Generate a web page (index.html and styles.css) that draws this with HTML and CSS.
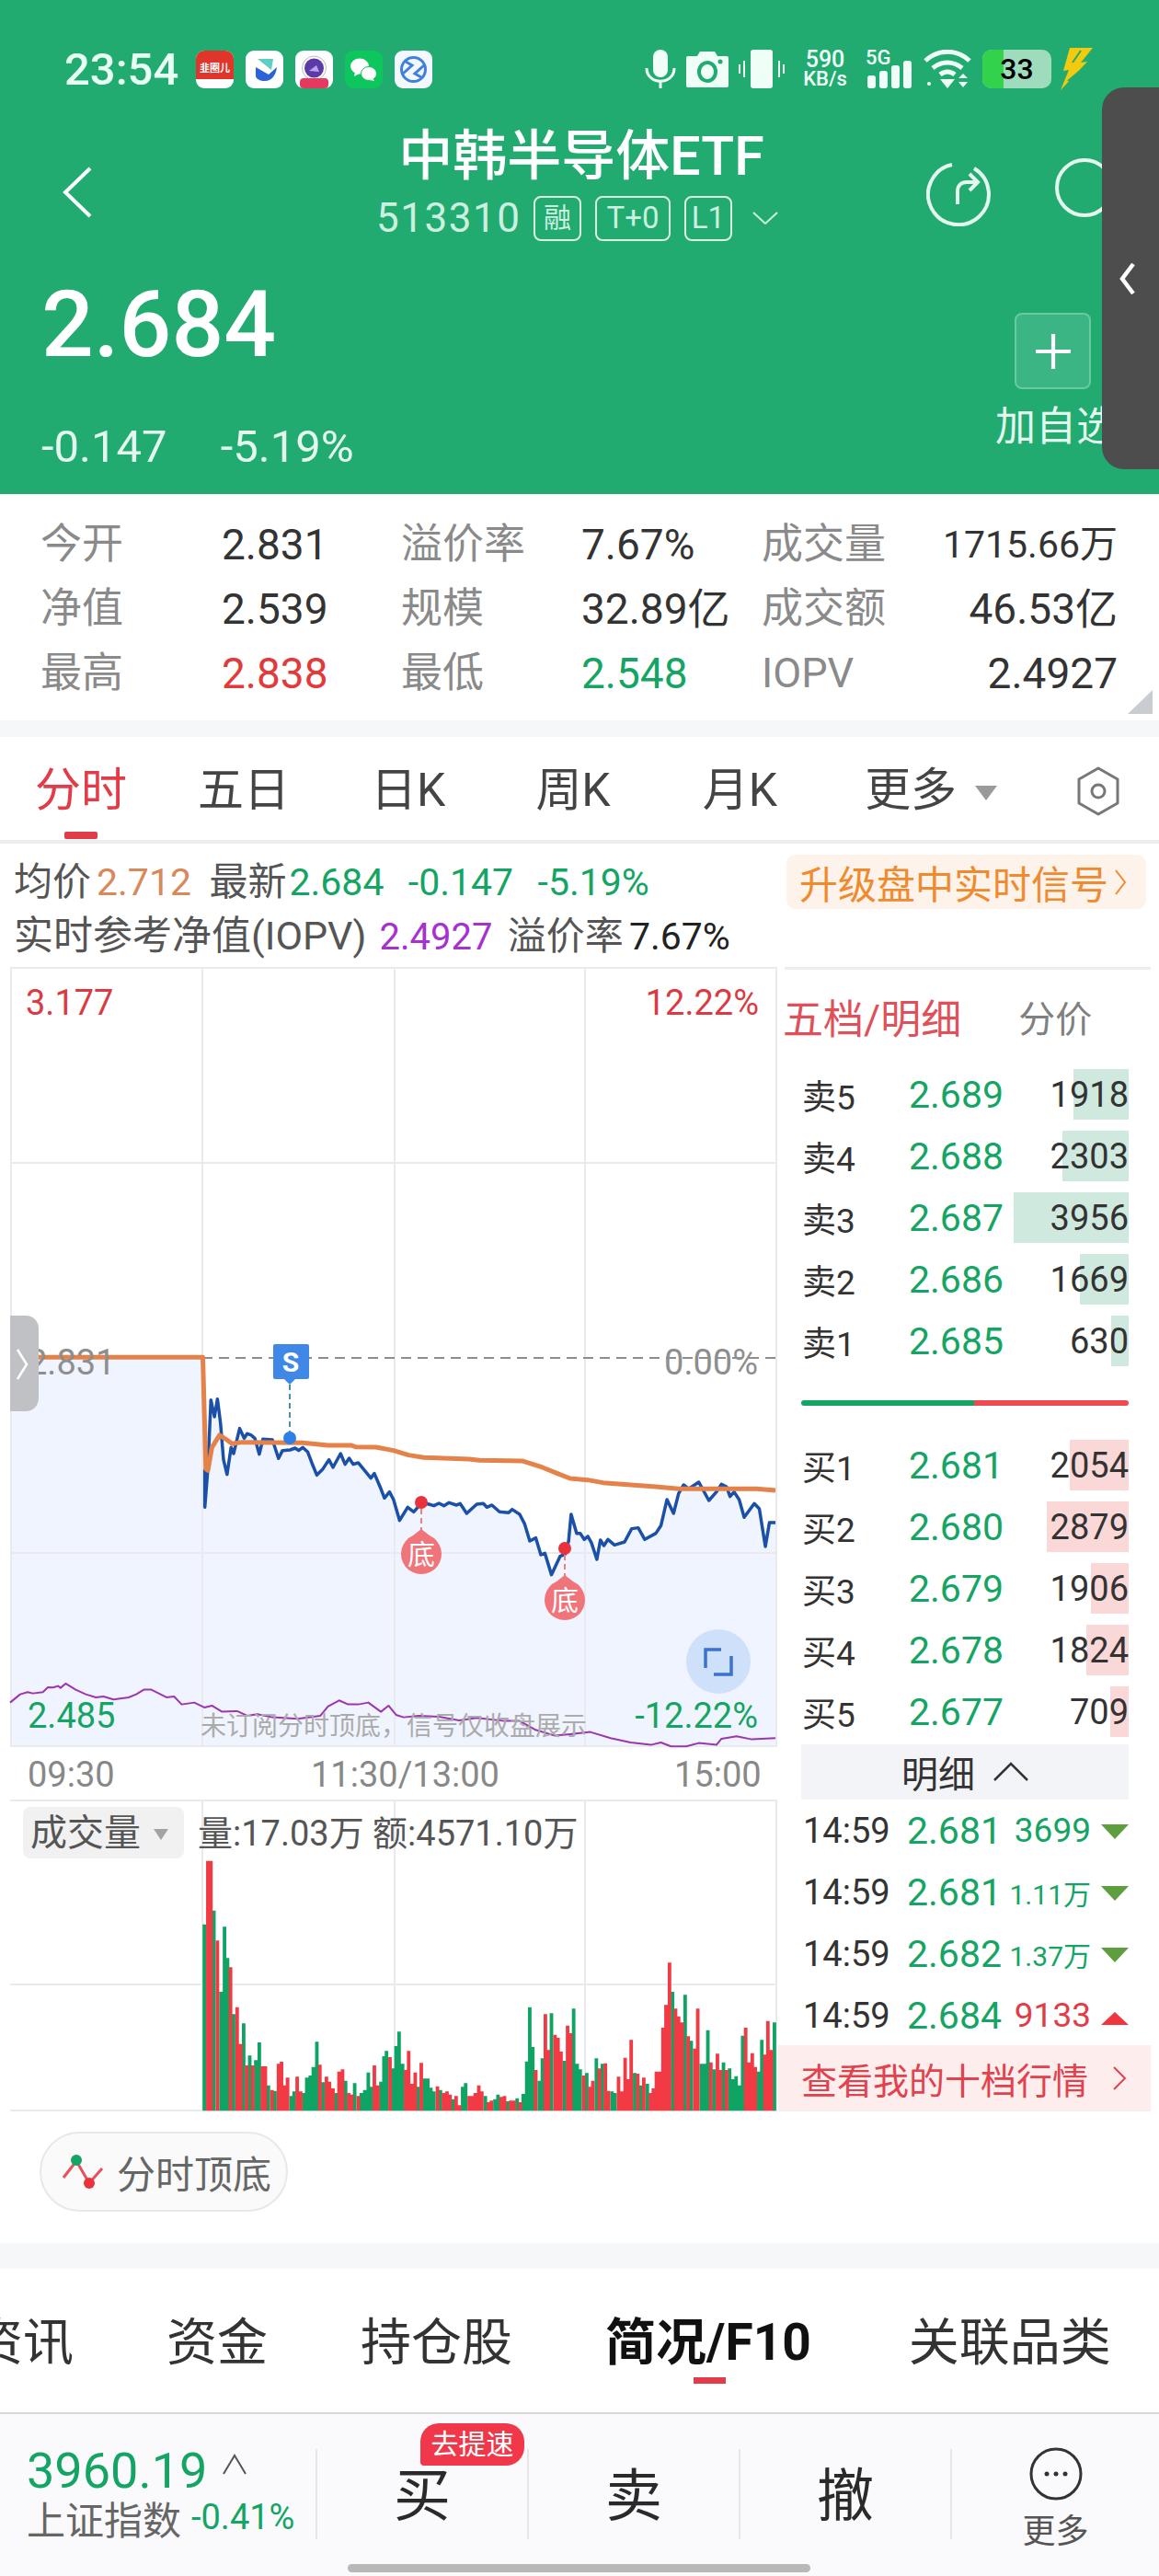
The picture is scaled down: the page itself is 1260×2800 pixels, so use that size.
FILE: index.html
```html
<!DOCTYPE html>
<html lang="zh-CN">
  <head>
    <meta charset="utf-8">
    <title>中韩半导体ETF</title>
    <link rel="stylesheet" href="styles.css">
  </head>
  <body>
    <div class="phone">

      <!-- 顶部绿色行情头 -->
      <header class="head">
        <div class="status">
          <span class="clock">23:54</span>
          <div class="apps">
            <svg class="app" viewBox="0 0 41 41"><rect width="41" height="41" rx="9" fill="#fff"/><path d="M0 9a9 9 0 0 1 9-9h23a9 9 0 0 1 9 9v22H0z" fill="#E0352B"/><text x="20.5" y="23" class="app-txt">韭圈儿</text></svg>
            <svg class="app" viewBox="0 0 41 41"><rect width="41" height="41" rx="9" fill="#fff"/><path d="M11 18l14 8 9-8c-1 9-6 15-13 15-5 0-10-2-10-6z" fill="#2A62D8"/><path d="M13 9h17l-2 12z" fill="#5CCFC0"/></svg>
            <svg class="app" viewBox="0 0 41 41"><rect width="41" height="41" rx="9" fill="#fff"/><circle cx="20.500" cy="19" r="13" fill="#fff" stroke="#bbb"/><circle cx="20.500" cy="19" r="10.500" fill="#5C3BA8"/><path d="M15 22l8-6 3 7z" fill="#B9A4EA"/><rect x="5" y="30" width="31" height="11" rx="4" fill="#E5395F"/></svg>
            <svg class="app" viewBox="0 0 41 41"><rect width="41" height="41" rx="9" fill="#0DC65E"/><ellipse cx="16" cy="17" rx="10" ry="8.500" fill="#fff"/><path d="M11 23l-1 5 6-3z" fill="#fff"/><ellipse cx="26" cy="25" rx="8.500" ry="7.500" fill="#fff" stroke="#0DC65E"/><path d="M30 30l2 3-5-1z" fill="#fff"/></svg>
            <svg class="app" viewBox="0 0 41 41"><rect width="41" height="41" rx="9" fill="#F3F7FE"/><circle cx="20.500" cy="20.500" r="13" fill="none" stroke="#3F80DC" stroke-width="3"/><path d="M9 25l10-9-7-4M32 16l-10 9 7 4" fill="none" stroke="#3F80DC" stroke-width="3"/></svg>
          </div>
          <div class="sys">
            <svg class="sys-mic" viewBox="0 0 34 42"><rect x="9" width="16" height="30" rx="8" fill="#EFFFF8"/><path d="M2 20c0 19 30 19 30 0M17 33v9" fill="none" stroke="#EFFFF8" stroke-width="3"/></svg>
            <svg class="sys-cam" viewBox="0 0 46 40"><path d="M2 6h10l3-5h16l3 5h10a2 2 0 0 1 2 2v30a2 2 0 0 1-2 2H2a2 2 0 0 1-2-2V8a2 2 0 0 1 2-2z" fill="#EFFFF8"/><ellipse cx="23" cy="23" rx="9" ry="10" fill="none" stroke="#22AB71" stroke-width="4"/><circle cx="37" cy="12" r="2.500" fill="#22AB71"/></svg>
            <svg class="sys-vib" viewBox="0 0 50 42"><rect x="13" width="24" height="42" rx="3" fill="#EFFFF8"/><path d="M6 12v18M1 16v10M44 12v18M49 16v10" stroke="#EFFFF8" stroke-width="2"/></svg>
            <div class="speed"><b>590</b><b>KB/s</b></div>
            <div class="net">
              <span class="net-5g">5G</span>
              <svg viewBox="0 0 48 30"><rect y="16" width="9" height="14" rx="3" fill="#EFFFF8"/><rect x="13" y="11" width="9" height="19" rx="3" fill="#EFFFF8"/><rect x="26" y="5" width="9" height="25" rx="3" fill="#EFFFF8"/><rect x="39" width="9" height="30" rx="3" fill="#EFFFF8"/></svg>
            </div>
            <svg class="sys-wifi" viewBox="0 0 52 42"><path d="M2 12c14-13 34-13 48 0M10 20c10-8 22-8 32 0M18 27c5-4 11-4 16 0" fill="none" stroke="#EFFFF8" stroke-width="5"/><path d="M18 32h16l-8 10z" fill="#EFFFF8"/><path d="M38 31l5-5 5 5zM38 35h10l-5 6z" fill="#EFFFF8"/><circle cx="6" cy="37" r="2" fill="#EFFFF8"/></svg>
            <div class="batt"><i class="batt-fill"></i><span>33</span></div>
            <svg class="sys-bolt" viewBox="0 0 35 46"><path d="M10 0h25L22 16l7-1L0 46l9-22-6 1z" fill="#F2CB10"/><path d="M13 16L22 3M8 36l12-10" stroke="#22AB71" stroke-width="2"/></svg>
          </div>
        </div>

        <div class="nav">
          <svg class="back" viewBox="0 0 32 56"><path d="M30 2L3 28l27 26" fill="none" stroke="#fff" stroke-width="4"/></svg>
          <div class="name">
            <h1>中韩半导体ETF</h1>
            <div class="code">
              <span class="code-no">513310</span>
              <span class="tag">融</span>
              <span class="tag tag-t">T+0</span>
              <span class="tag tag-l">L1</span>
              <svg class="code-more" viewBox="0 0 28 14"><path d="M1 1l13 12L27 1" fill="none" stroke="#CDEFE0" stroke-width="2"/></svg>
            </div>
          </div>
          <svg class="nav-icons" viewBox="0 0 210 76"><path d="M28 9a33 33 0 1 0 24 4" fill="none" stroke="#E3F7EE" stroke-width="4"/><path d="M34 52V38c0-6 4-10 10-10h10M47 19l9 9-9 9" fill="none" stroke="#E3F7EE" stroke-width="4"/><circle cx="172" cy="34" r="30" fill="none" stroke="#E3F7EE" stroke-width="4"/></svg>
        </div>

        <div class="price-row">
          <div>
            <div class="price">2.684</div>
            <div class="change"><span>-0.147</span><span>-5.19%</span></div>
          </div>
          <div class="watch">
            <div class="watch-btn"><svg viewBox="0 0 40 40"><path d="M20 2v36M2 20h36" stroke="#fff" stroke-width="4"/></svg></div>
            <div class="watch-txt">加自选</div>
          </div>
        </div>
      </header>

      <!-- 盘口数据 -->
      <section class="stats">
        <span class="lab">今开</span><span class="val">2.831</span>
        <span class="lab">溢价率</span><span class="val">7.67%</span>
        <span class="lab">成交量</span><span class="val val-end val-sm">1715.66万</span>
        <span class="lab">净值</span><span class="val">2.539</span>
        <span class="lab">规模</span><span class="val">32.89亿</span>
        <span class="lab">成交额</span><span class="val val-end">46.53亿</span>
        <span class="lab">最高</span><span class="val up">2.838</span>
        <span class="lab">最低</span><span class="val down">2.548</span>
        <span class="lab">IOPV</span><span class="val val-end">2.4927</span>
        <i class="corner"></i>
      </section>
      <div class="gap gap-a"></div>

      <!-- 周期切换 -->
      <nav class="periods">
        <span class="period period-on">分时</span>
        <span class="period p2">五日</span>
        <span class="period p3">日K</span>
        <span class="period p4">周K</span>
        <span class="period p5">月K</span>
        <span class="period p6">更多<i class="caret"></i></span>
        <svg class="hex" viewBox="0 0 48 54"><path d="M24 2l21 12v26L24 52 3 40V14z" fill="none" stroke="#777" stroke-width="3" stroke-linejoin="round"/><circle cx="24" cy="27" r="7" fill="none" stroke="#777" stroke-width="3"/></svg>
      </nav>

      <div class="brief">
        <div class="brief-row">
          <span class="br-l">均价</span><span class="br-n avg">2.712</span>
          <span class="br-l br-gap">最新</span><span class="br-n br-new down">2.684</span>
          <span class="br-n down br-num">-0.147</span>
          <span class="br-n down br-num">-5.19%</span>
        </div>
        <div class="brief-row">
          <span class="br-l br-long">实时参考净值(IOPV)</span><span class="br-n iopv">2.4927</span>
          <span class="br-l br-gap2">溢价率</span><span class="br-n br-v">7.67%</span>
        </div>
        <div class="signal">升级盘中实时信号<svg viewBox="0 0 14 30"><path d="M2 2l10 13L2 28" fill="none" stroke="#F08A2E" stroke-width="2"/></svg></div>
      </div>

      <!-- 分时图 + 五档 -->
      <div class="board">
        <svg class="chart" viewBox="0 1050 853 1245">
          <path class="fill" d="M11 1476H220L222 1597 L223 1638 226 1597 229 1522 233 1540 236 1521 240 1547 243 1587 247 1603 251 1573 254 1580 260 1553 265 1563 269 1558 273 1560 277 1563 282 1581 286 1564 296 1565 303 1585 307 1577 315 1576 321 1574 325 1577 329 1573 335 1578 339 1590 344 1603 351 1597 358 1587 362 1595 370 1580 375 1592 380 1585 384 1592 389 1590 398 1600 403 1607 407 1602 414 1618 418 1628 423 1622 428 1630 434 1653 443 1638 450 1643 458 1633 466 1635 472 1637 477 1634 483 1637 488 1633 496 1636 500 1634 507 1645 518 1635 525 1634 529 1638 535 1636 543 1643 553 1644 557 1641 565 1646 570 1657 576 1675 583 1672 588 1690 592 1688 600 1712 609 1692 614 1689 618 1675 621 1646 627 1667 631 1667 635 1673 639 1670 643 1677 649 1695 653 1674 657 1680 661 1673 668 1679 679 1676 687 1662 694 1661 701 1673 713 1667 718 1658 725 1630 732 1645 738 1623 743 1614 749 1618 760 1611 771 1631 779 1622 784 1613 790 1616 794 1627 798 1622 804 1630 809 1649 820 1634 825 1640 832 1681 836 1655 843 1655V1898H11z"/>
          <path class="grid" d="M11 1052H845M11 1264H845M11 1688H845M11 1898H845M12 1052V1898M220 1052V1898M429 1052V1898M636 1052V1898M844 1052V1898"/>
          <path class="mid" d="M220 1476H845"/>
          <g transform="translate(0 1400) scale(.5485 .3333)">
            <polyline class="ln ln-purple" points="20,1352 40,1325 55,1318 65,1322 85,1318 95,1302 105,1303 115,1298 120,1304 130,1290 150,1310 170,1325 190,1335 205,1332 225,1342 255,1335 270,1325 285,1310 300,1310 330,1335 345,1332 360,1358 385,1352 405,1368 420,1362 440,1382 470,1380 490,1395 510,1390 540,1400 590,1405 635,1395 650,1365 672,1345 690,1358 710,1358 730,1352 755,1382 770,1362 785,1392 800,1400 830,1395 870,1398 910,1410 945,1402 1000,1412 1030,1412 1060,1440 1100,1460 1130,1455 1170,1448 1210,1468 1250,1482 1290,1490 1310,1482 1330,1495 1360,1495 1385,1484 1420,1490 1430,1470 1460,1462 1490,1472 1537,1468"/>
            <polyline class="ln ln-blue" points="406,590 406,715 412,590 418,365 425,420 431,362 437,440 443,560 450,608 458,520 463,540 475,458 484,490 490,475 498,480 505,490 514,542 521,493 540,495 552,556 560,530 575,528 585,522 592,530 600,520 610,535 618,570 628,610 640,590 652,560 660,585 675,540 684,575 692,555 700,575 710,570 725,600 735,620 742,605 755,655 762,685 772,665 780,690 792,758 808,715 820,730 836,700 850,705 860,710 870,702 880,710 890,700 905,708 912,703 925,735 945,705 958,703 965,715 975,708 990,730 1008,733 1015,722 1030,738 1040,770 1050,825 1062,815 1072,870 1080,865 1093,935 1110,875 1120,868 1127,825 1132,738 1143,800 1150,800 1158,820 1165,810 1172,830 1183,885 1190,822 1197,840 1205,820 1218,838 1238,828 1252,785 1265,782 1278,820 1300,800 1310,775 1322,690 1335,735 1345,670 1355,642 1365,655 1385,633 1405,693 1420,665 1430,640 1440,648 1447,680 1455,665 1465,690 1475,748 1495,703 1505,720 1517,843 1525,765 1537,765"/>
            <polyline class="ln ln-orange" points="20,226 402,226 408,590 412,595 420,520 435,480 445,490 460,508 480,503 600,505 650,513 695,513 705,518 745,519 780,530 810,545 840,553 930,558 950,562 1035,564 1075,585 1105,605 1130,621 1165,626 1195,635 1300,648 1345,655 1500,655 1537,660"/>
          </g>

          <text class="t t-up" x="28" y="1103">3.177</text>
          <text class="t t-up t-end" x="825" y="1103">12.22%</text>
          <text class="t t-grey" x="30" y="1494">2.831</text>
          <text class="t t-grey t-end" x="824" y="1494">0.00%</text>
          <text class="t t-down" x="30" y="1878">2.485</text>
          <text class="t t-down t-end" x="824" y="1878">-12.22%</text>
          <text class="t-tip" x="218" y="1886">未订阅分时顶底，信号仅收盘展示</text>

          <path class="hd" d="M11 1430h17a14 14 0 0 1 14 14v76a14 14 0 0 1-14 14H11z"/>
          <path d="M19 1467l10 16-10 16" fill="none" stroke="#fff" stroke-width="2.500"/>

          <path class="dash dash-s" d="M315 1505V1557"/>
          <circle cx="315" cy="1563" r="7" fill="#2F7FE6"/>
          <path d="M299 1461h35a2 2 0 0 1 2 2v34a2 2 0 0 1-2 2h-13l-6 6-6-6h-10a2 2 0 0 1-2-2v-34a2 2 0 0 1 2-2z" fill="#3F88E8"/>
          <text class="t-s" x="316" y="1491">S</text>

          <path class="dash dash-r" d="M458 1640V1664"/>
          <circle cx="458" cy="1633" r="7" fill="#E8323C"/>
          <path class="pin" d="M458 1662l9 7a22 22 0 1 1-18 0z"/>
          <text class="t-pin" x="458" y="1700">底</text>
          <path class="dash dash-r" d="M614 1690V1714"/>
          <circle cx="614" cy="1683" r="7" fill="#E8323C"/>
          <path class="pin" d="M614 1712l9 7a22 22 0 1 1-18 0z"/>
          <text class="t-pin" x="614" y="1750">底</text>

          <ellipse cx="781" cy="1806" rx="35" ry="35" fill="#CFE0FA"/>
          <path d="M784 1793H767V1813M795 1800V1820H776" fill="none" stroke="#3A72D0" stroke-width="3.500"/>

          <text class="t-axis" x="30" y="1942">09:30</text>
          <text class="t-axis" x="338" y="1942">11:30/13:00</text>
          <text class="t-axis" x="733" y="1942">15:00</text>

          <path class="grid" d="M11 1957H845M11 2157H845M11 2294H845M220 1957V2294M429 1957V2294M636 1957V2294M844 1957V2294"/>
          <g transform="translate(0 1900) scale(.5485 .3333)">
            <path class="bar bar-g" d="M405 575V1183M424 530V1183M438 795V1183M445 583V1183M451 685V1183M463 868V1183M483 898V1183M495 1003V1183M507 1018V1183M514 960V1183M532 1100V1183M545 1118V1183M577 1135V1183M583 1120V1183M602 1125V1183M608 1075V1183M615 1068V1183M621 1040V1183M628 958V1183M640 1090V1183M666 1125V1183M685 1085V1183M703 1093V1183M716 1125V1183M723 1115V1183M730 1058V1183M736 1105V1183M755 1088V1183M761 1005V1183M766 988V1183M779 1045V1183M785 972V1183M791 925V1183M798 1030V1183M829 1105V1183M841 1078V1183M848 1078V1183M854 1108V1183M860 1120V1183M873 1115V1183M898 1145V1183M917 1105V1183M923 1093V1183M962 1135V1183M981 1145V1183M987 1130V1183M1006 1152V1183M1025 1142V1183M1037 1128V1183M1044 1022V1183M1050 845V1183M1056 975V1183M1069 1085V1183M1075 1012V1183M1093 865V1183M1119 1020V1183M1137 850V1183M1144 1030V1183M1150 1048V1183M1163 1060V1183M1182 1012V1183M1194 1030V1183M1213 1120V1183M1219 1125V1183M1258 1060V1183M1270 1100V1183M1283 1095V1183M1333 795V1183M1358 805V1183M1370 955V1183M1390 1030V1183M1396 1030V1183M1403 920V1183M1415 1048V1183M1434 1025V1183M1446 1045V1183M1452 1080V1183M1459 1070V1183M1466 1100V1183M1472 938V1183M1504 1055V1183M1510 952V1183M1535 895V1183"/>
            <path class="bar bar-r" d="M412 368V1183M418 368V1183M431 628V1183M457 715V1183M470 845V1183M477 965V1183M489 1035V1183M501 1035V1183M520 1038V1183M526 1038V1183M539 1115V1183M552 1030V1183M558 1023V1183M564 1100V1183M570 1075V1183M589 1072V1183M596 1120V1183M634 1033V1183M647 1072V1183M653 1088V1183M660 1110V1183M672 1055V1183M679 1048V1183M691 1125V1183M697 1130V1183M710 1135V1183M742 1035V1183M749 1100V1183M773 1008V1183M804 1050V1183M810 988V1183M817 1095V1183M823 1058V1183M835 1027V1183M867 1103V1183M879 1125V1183M886 1120V1183M892 1130V1183M904 1135V1183M911 1165V1183M930 1135V1183M936 1135V1183M942 1125V1183M949 1100V1183M955 1120V1183M968 1155V1183M974 1150V1183M993 1138V1183M1000 1135V1183M1012 1150V1183M1019 1150V1183M1031 1155V1183M1062 1050V1183M1081 868V1183M1087 985V1183M1100 935V1183M1106 945V1183M1112 990V1183M1125 905V1183M1131 930V1183M1157 1068V1183M1169 1105V1183M1175 1085V1183M1188 1045V1183M1200 1028V1183M1206 1118V1183M1226 1072V1183M1232 1120V1183M1239 1010V1183M1245 1080V1183M1251 952V1183M1264 1062V1183M1276 1075V1183M1289 1125V1183M1295 1110V1183M1301 1055V1183M1307 1055V1183M1314 912V1183M1320 838V1183M1327 700V1183M1339 850V1183M1345 875V1183M1352 895V1183M1364 940V1183M1377 980V1183M1383 850V1183M1409 1025V1183M1422 997V1183M1428 1050V1183M1440 1050V1183M1478 912V1183M1485 1025V1183M1491 995V1183M1497 1040V1183M1516 1000V1183M1522 890V1183M1529 985V1183"/>
          </g>

          <rect x="25" y="1964" width="175" height="56" rx="8" fill="#F1F1F1"/>
          <text class="t-vol" x="33" y="2006">成交量</text>
          <path d="M167 1988h16l-8 12z" fill="#A3A3A3"/>
          <text class="t-volinfo" x="215" y="2006">量:17.03万 额:4571.10万</text>
        </svg>

        <aside class="book">
          <div class="book-top"><span class="book-tab">五档/明细</span><span class="book-fen">分价</span></div>
          <div class="lv"><span class="lv-n">卖5</span><span class="lv-p">2.689</span><span class="lv-v"><i class="lv-bar lv-s" style="width:60px"></i><em>1918</em></span></div>
          <div class="lv"><span class="lv-n">卖4</span><span class="lv-p">2.688</span><span class="lv-v"><i class="lv-bar lv-s" style="width:72px"></i><em>2303</em></span></div>
          <div class="lv"><span class="lv-n">卖3</span><span class="lv-p">2.687</span><span class="lv-v"><i class="lv-bar lv-s" style="width:125px"></i><em>3956</em></span></div>
          <div class="lv"><span class="lv-n">卖2</span><span class="lv-p">2.686</span><span class="lv-v"><i class="lv-bar lv-s" style="width:53px"></i><em>1669</em></span></div>
          <div class="lv"><span class="lv-n">卖1</span><span class="lv-p">2.685</span><span class="lv-v"><i class="lv-bar lv-s" style="width:19px"></i><em>630</em></span></div>
          <div class="ratio"><i class="ratio-g"></i><i class="ratio-r"></i></div>
          <div class="lv"><span class="lv-n">买1</span><span class="lv-p">2.681</span><span class="lv-v"><i class="lv-bar lv-b" style="width:64px"></i><em>2054</em></span></div>
          <div class="lv"><span class="lv-n">买2</span><span class="lv-p">2.680</span><span class="lv-v"><i class="lv-bar lv-b" style="width:89px"></i><em>2879</em></span></div>
          <div class="lv"><span class="lv-n">买3</span><span class="lv-p">2.679</span><span class="lv-v"><i class="lv-bar lv-b" style="width:41px"></i><em>1906</em></span></div>
          <div class="lv"><span class="lv-n">买4</span><span class="lv-p">2.678</span><span class="lv-v"><i class="lv-bar lv-b" style="width:46px"></i><em>1824</em></span></div>
          <div class="lv"><span class="lv-n">买5</span><span class="lv-p">2.677</span><span class="lv-v"><i class="lv-bar lv-b" style="width:20px"></i><em>709</em></span></div>
          <div class="detail-head">明细<svg viewBox="0 0 38 22"><path d="M1 20L19 2l18 18" fill="none" stroke="#333" stroke-width="2.500"/></svg></div>
          <div class="tick"><span class="tk-t">14:59</span><span class="tk-p">2.681</span><span class="tk-v down">3699</span><i class="tri tri-d"></i></div>
          <div class="tick"><span class="tk-t">14:59</span><span class="tk-p">2.681</span><span class="tk-v tk-sm down">1.11万</span><i class="tri tri-d"></i></div>
          <div class="tick"><span class="tk-t">14:59</span><span class="tk-p">2.682</span><span class="tk-v tk-sm down">1.37万</span><i class="tri tri-d"></i></div>
          <div class="tick"><span class="tk-t">14:59</span><span class="tk-p">2.684</span><span class="tk-v tk-up">9133</span><i class="tri tri-u"></i></div>
          <div class="ten">查看我的十档行情<svg viewBox="0 0 16 28"><path d="M2 2l12 12L2 26" fill="none" stroke="#E0424E" stroke-width="2"/></svg></div>
        </aside>
      </div>

      <div class="chip-row">
        <div class="chip">
          <svg viewBox="0 0 46 40"><path d="M2 26L16 8l14 24L44 16" fill="none" stroke="#E8505A" stroke-width="3"/><circle cx="16" cy="7" r="6" fill="#14A565"/><circle cx="30" cy="32" r="6" fill="#E8323C"/></svg>
          <span>分时顶底</span>
        </div>
      </div>
      <div class="gap gap-b"></div>

      <nav class="tabs">
        <span class="tab tab-cut">资讯</span>
        <span class="tab">资金</span>
        <span class="tab">持仓股</span>
        <span class="tab tab-on">简况/F10</span>
        <span class="tab tab-last">关联品类</span>
      </nav>

      <footer class="foot">
        <div class="idx">
          <div class="idx-top"><span class="idx-no">3960.19</span><svg viewBox="0 0 28 24"><path d="M2 22L14 2l12 20" fill="none" stroke="#555" stroke-width="2"/></svg></div>
          <div class="idx-sub"><span>上证指数</span><span class="idx-pct">-0.41%</span></div>
        </div>
        <div class="act act-buy">买<span class="badge">去提速</span></div>
        <div class="act">卖</div>
        <div class="act">撤</div>
        <div class="act act-more">
          <svg viewBox="0 0 58 58"><circle cx="29" cy="29" r="27" fill="none" stroke="#333" stroke-width="3"/><circle cx="19" cy="29" r="2.500" fill="#333"/><circle cx="29" cy="29" r="2.500" fill="#333"/><circle cx="39" cy="29" r="2.500" fill="#333"/></svg>
          <span>更多</span>
        </div>
        <i class="home-bar"></i>
      </footer>

      <!-- 侧边悬浮条 -->
      <div class="side">
        <svg viewBox="0 0 18 36"><path d="M15 2L3 18l12 16" fill="none" stroke="#fff" stroke-width="4.500"/></svg>
      </div>
    </div>
  </body>
</html>
```

FILE: styles.css
```css
* {
  box-sizing: border-box;
}
html, body {
  margin: 0;
  background: #fff;
}
body {
  font-family: Roboto, "Noto Sans CJK SC", sans-serif;
  color: #333;
}
svg {
  display: block;
}
i, em {
  font-style: normal;
}
.phone {
  position: relative;
  width: 1260px;
  height: 2800px;
  overflow: hidden;
  background: #fff;
}
.up { color: #E23A3A; }
.down { color: #14A565; }

/* head */
.head {
  height: 537px;
  padding-top: 54px;
  background: #22AB71;
  color: #fff;
}
.status {
  display: flex;
  align-items: center;
  height: 42px;
  padding: 0 70px;
}
.clock {
  width: 143px;
  font-size: 49px;
  font-weight: 500;
  color: #E8FFF4;
}
.apps {
  display: flex;
  gap: 13px;
}
.app {
  width: 41px;
  height: 41px;
}
.app-txt {
  font-size: 11px;
  font-weight: 700;
  fill: #fff;
  text-anchor: middle;
}
.sys {
  display: flex;
  align-items: center;
  margin-left: 231px;
}
.sys-mic { width: 34px; height: 42px; }
.sys-cam { width: 46px; height: 40px; margin-left: 11px; }
.sys-vib { width: 50px; height: 42px; margin-left: 11px; }
.speed {
  display: flex;
  flex-direction: column;
  align-items: center;
  width: 52px;
  margin-left: 18px;
  font-size: 25px;
  line-height: 21px;
  color: #EFFFF8;
}
.speed b {
  font-weight: 500;
}
.speed b:last-child {
  font-size: 22px;
}
.net {
  position: relative;
  width: 48px;
  height: 42px;
  margin-left: 20px;
}
.net svg {
  position: absolute;
  bottom: 0;
  left: 0;
  width: 48px;
  height: 30px;
}
.net-5g {
  position: absolute;
  top: -3px;
  left: -2px;
  font-size: 22px;
  font-weight: 500;
  color: #EFFFF8;
  line-height: 24px;
}
.sys-wifi { width: 52px; height: 42px; margin-left: 13px; }
.batt {
  position: relative;
  width: 75px;
  height: 42px;
  margin-left: 12px;
  border-radius: 10px;
  background: #9FDCBD;
  overflow: hidden;
  text-align: center;
  font-size: 32px;
  font-weight: 500;
  line-height: 42px;
  color: #000;
}
.batt span {
  position: relative;
}
.batt-fill {
  position: absolute;
  left: 0;
  top: 0;
  bottom: 0;
  width: 23px;
  background: #33D24C;
}
.sys-bolt { width: 35px; height: 46px; margin-left: 10px; }

.nav {
  display: flex;
  height: 179px;
  padding-top: 39px;
}
.back {
  width: 32px;
  height: 56px;
  margin: 46px 0 0 68px;
}
.name {
  width: 520px;
  margin-left: 272px;
  text-align: center;
}
.name h1 {
  margin: 0;
  font-size: 59px;
  font-weight: 500;
  line-height: 70px;
}
.code {
  display: flex;
  align-items: center;
  height: 56px;
  margin-top: 4px;
  padding-left: 37px;
  color: #CDEFE0;
}
.code-no {
  width: 171px;
  text-align: left;
  font-size: 44px;
  letter-spacing: 1.500px;
}
.tag {
  width: 52px;
  height: 49px;
  margin-right: 15px;
  border: 2px solid #D9F3E7;
  border-radius: 8px;
  font-size: 30px;
  line-height: 44px;
  text-align: center;
}
.tag-t { width: 82px; font-size: 33px; }
.tag-l { width: 52px; font-size: 33px; margin-right: 22px; }
.code-more { width: 28px; height: 14px; }
.nav-icons {
  width: 210px;
  height: 76px;
  margin: 35px 0 0 115px;
  flex: none;
}

.price-row {
  display: flex;
  justify-content: space-between;
  padding: 18px 0 0 45px;
}
.price {
  font-size: 100px;
  font-weight: 500;
  line-height: 120px;
}
.change {
  display: flex;
  gap: 58px;
  margin-top: 47px;
  font-size: 49px;
  line-height: 52px;
  color: #E3F7EE;
}
.watch {
  width: 178px;
  overflow: hidden;
}
.watch-btn {
  display: flex;
  align-items: center;
  justify-content: center;
  width: 83px;
  height: 83px;
  margin: 47px 0 0 21px;
  border: 2px solid #6BC9A0;
  border-radius: 8px;
  background: #3BB584;
}
.watch-btn svg {
  width: 42px;
  height: 42px;
}
.watch-txt {
  margin-top: 15px;
  font-size: 44px;
  line-height: 52px;
  white-space: nowrap;
  color: #E3F7EE;
}

/* stats */
.stats {
  position: relative;
  display: grid;
  grid-template-columns: 197px 195px 196px 196px 140px 1fr;
  grid-auto-rows: 70px;
  align-items: center;
  height: 246px;
  padding: 20px 45px 0 44px;
}
.lab {
  font-size: 45px;
  line-height: 60px;
  color: #8A8A8A;
  white-space: nowrap;
}
.val {
  font-size: 46px;
  line-height: 60px;
  color: #333;
  white-space: nowrap;
}
.stats .up { color: #E23A3A; }
.stats .down { color: #14A565; }
.val-end { text-align: right; }
.val-sm { font-size: 41px; }
.corner {
  position: absolute;
  right: 7px;
  bottom: 7px;
  border-left: 27px solid transparent;
  border-bottom: 26px solid #C9CDD2;
}
.gap { background: #F6F7F8; }
.gap-a { height: 18px; }
.gap-b { height: 28px; }

/* periods */
.periods {
  position: relative;
  display: flex;
  align-items: center;
  height: 116px;
  padding-left: 38px;
  border-bottom: 4px solid #EDEDED;
  font-size: 50px;
  color: #444;
}
.period {
  white-space: nowrap;
  line-height: 116px;
  margin-top: 3px;
}
.p2 { margin-left: 77px; }
.p3 { margin-left: 88px; }
.p4 { margin-left: 98px; }
.p5 { margin-left: 100px; }
.p6 { margin-left: 95px; }
.period-on {
  position: relative;
  color: #E23C48;
}
.period-on::after {
  content: "";
  position: absolute;
  left: 32px;
  bottom: 5px;
  width: 36px;
  height: 8px;
  border-radius: 2px;
  background: #E23C48;
}
.caret {
  display: inline-block;
  margin-left: 20px;
  vertical-align: 6px;
  border-left: 12px solid transparent;
  border-right: 12px solid transparent;
  border-top: 16px solid #9A9A9A;
}
.hex {
  width: 48px;
  height: 54px;
  margin: 6px 0 0 86px;
}

/* brief */
.brief {
  position: relative;
  height: 133px;
  padding: 12px 0 0 15px;
  font-size: 42px;
}
.brief-row {
  height: 59px;
  line-height: 59px;
  white-space: nowrap;
}
.br-l { color: #555; }
.br-long { font-size: 43px; }
.br-n {
  font-size: 41px;
  margin-left: 6px;
}
.br-gap { margin-left: 9px; }
.br-gap2 { margin-left: 6px; }
.br-n.br-new { margin-left: 3px; }
.br-n.br-num { margin-left: 16px; }
.br-v { color: #222; }
.avg { color: #D9885A; }
.iopv { color: #A631CF; margin-left: 14px; font-size: 40px; }
.signal {
  position: absolute;
  left: 855px;
  top: 12px;
  display: flex;
  align-items: center;
  width: 391px;
  height: 59px;
  padding-left: 14px;
  border-radius: 10px;
  background: #FEF3EA;
  font-size: 42px;
  color: #F08A2E;
}
.signal svg {
  width: 14px;
  height: 30px;
  margin-left: 6px;
}

/* chart + book */
.board {
  display: flex;
  height: 1245px;
}
.chart {
  width: 853px;
  height: 1245px;
  flex: none;
}
.fill { fill: #F0F4FE; }
.grid {
  fill: none;
  stroke: #E8EAEE;
  stroke-width: 2;
}
.mid {
  fill: none;
  stroke: #8E8E8E;
  stroke-width: 2;
  stroke-dasharray: 11 7;
}
.ln {
  fill: none;
  vector-effect: non-scaling-stroke;
  stroke-linejoin: round;
}
.ln-blue { stroke: #1A50A8; stroke-width: 3.500; }
.ln-orange { stroke: #E5824A; stroke-width: 5; }
.ln-purple { stroke: #9C35B0; stroke-width: 2; }
.bar { fill: none; stroke-width: 7; }
.bar-g { stroke: #0FA463; }
.bar-r { stroke: #F23A44; }
.t {
  font-size: 38px;
}
.t-up { fill: #DC3A42; }
.t-down { fill: #14A565; }
.t-grey { fill: #8E8E8E; }
.t-end { text-anchor: end; }
.t-tip {
  font-size: 28px;
  fill: #ABABAB;
}
.hd { fill: #BFC1C4; }
.dash {
  fill: none;
  stroke-width: 2;
  stroke-dasharray: 6 4;
}
.dash-s { stroke: #4C8FA8; }
.dash-r { stroke: #EF7F85; }
.t-s {
  font-size: 30px;
  font-weight: 700;
  fill: #fff;
  text-anchor: middle;
}
.pin { fill: #F0757B; }
.t-pin {
  font-size: 30px;
  fill: #fff;
  text-anchor: middle;
}
.t-axis {
  font-size: 38px;
  fill: #888;
}
.t-vol {
  font-size: 40px;
  fill: #555;
}
.t-volinfo {
  font-size: 38px;
  fill: #555;
}

.book {
  flex: 1;
  padding-top: 1px;
}
.book-top {
  display: flex;
  align-items: center;
  height: 105px;
  margin-right: 9px;
  border-top: 3px solid #EDEDED;
  font-size: 44px;
}
.book-tab {
  margin-left: -2px;
  color: #E0505A;
  white-space: nowrap;
}
.book-fen {
  margin-left: 62px;
  font-size: 40px;
  color: #808080;
}
.lv {
  position: relative;
  display: flex;
  align-items: center;
  height: 67px;
  padding: 0 33px 0 19px;
}
.lv-n {
  width: 116px;
  font-size: 37px;
  color: #333;
  white-space: nowrap;
}
.lv-p {
  width: 112px;
  font-size: 41px;
  color: #14A565;
}
.lv-v {
  flex: 1;
  text-align: right;
  font-size: 38px;
  color: #333;
}
.lv-v em {
  position: relative;
}
.lv-bar {
  position: absolute;
  right: 33px;
  top: 6px;
  height: 55px;
}
.lv-s { background: #D0E9DF; }
.lv-b { background: #FBD8D8; }
.ratio {
  display: flex;
  height: 6px;
  margin: 31px 33px 31px 18px;
  border-radius: 3px;
  overflow: hidden;
}
.ratio-g { width: 188px; background: #14A565; }
.ratio-r { flex: 1; background: #EF4A50; }
.detail-head {
  display: flex;
  align-items: center;
  justify-content: center;
  height: 60px;
  margin: 2px 33px 0 18px;
  background: #F3F4F8;
  font-size: 40px;
  color: #333;
}
.detail-head svg {
  width: 38px;
  height: 22px;
  margin-left: 20px;
}
.tick {
  display: flex;
  align-items: center;
  height: 67px;
  padding: 0 33px 0 20px;
  white-space: nowrap;
}
.tk-t {
  width: 113px;
  font-size: 38px;
  color: #333;
}
.tk-p {
  width: 102px;
  font-size: 41px;
  color: #14A565;
}
.tk-v {
  width: 98px;
  text-align: right;
  font-size: 37px;
}
.tk-sm { font-size: 30px; }
.tk-up { color: #E23C48; }
.tri {
  margin-left: 11px;
  border-left: 15px solid transparent;
  border-right: 15px solid transparent;
}
.tri-d { border-top: 16px solid #5E9E3E; margin-top: 3px; }
.tri-u { border-bottom: 14px solid #F0363C; margin-top: 6px; }
.ten {
  display: flex;
  align-items: center;
  height: 72px;
  margin: -1px 9px 0 -7px;
  padding-left: 25px;
  background: #FDEDED;
  border-bottom: 1px solid #EEE;
  font-size: 39px;
  color: #E0424E;
  white-space: nowrap;
}
.ten svg {
  width: 16px;
  height: 28px;
  margin-left: 26px;
}

/* chip */
.chip-row {
  height: 143px;
  padding: 22px 0 0 43px;
}
.chip {
  display: flex;
  align-items: center;
  gap: 14px;
  width: 270px;
  height: 87px;
  padding-left: 22px;
  border: 2px solid #E8E8E8;
  border-radius: 44px;
  background: #FAFAFA;
  font-size: 42px;
  color: #666;
}
.chip svg {
  width: 46px;
  height: 40px;
}

/* bottom tabs */
.tabs {
  position: relative;
  display: flex;
  align-items: center;
  height: 158px;
  padding-top: 3px;
  border-bottom: 2px solid #D8D8D8;
  font-size: 55px;
  line-height: 70px;
  color: #333;
  white-space: nowrap;
}
.tab {
  margin-left: 101px;
}
.tab-cut {
  margin-left: -30px;
}
.tab-last {
  margin-left: 106px;
}
.tab-on {
  position: relative;
  font-weight: 700;
  color: #111;
}
.tab-on::after {
  content: "";
  position: absolute;
  left: 96px;
  bottom: -10px;
  width: 35px;
  height: 7px;
  background: #E23C48;
}

/* footer */
.foot {
  position: relative;
  display: flex;
  height: 176px;
  padding-top: 38px;
  background: #FAFAFC;
}
.idx {
  width: 343px;
  height: 98px;
  padding-left: 29px;
  white-space: nowrap;
}
.idx-top {
  display: flex;
  align-items: center;
  height: 48px;
  margin-top: -1px;
  font-size: 54px;
  color: #14A565;
}
.idx-top svg {
  width: 28px;
  height: 24px;
  margin: -12px 0 0 16px;
}
.idx-sub {
  display: flex;
  align-items: center;
  gap: 11px;
  height: 48px;
  margin-top: 3px;
  font-size: 42px;
  color: #666;
}
.idx-pct {
  font-size: 38px;
  color: #14A565;
}
.act {
  position: relative;
  width: 230px;
  height: 98px;
  border-left: 2px solid #E6E6E8;
  font-size: 62px;
  line-height: 104px;
  text-align: center;
  color: #2A2A2A;
}
.act-more {
  width: auto;
  flex: 1;
  font-size: 36px;
  line-height: 44px;
  color: #555;
}
.act-more svg {
  width: 58px;
  height: 58px;
  margin: -2px auto 0;
}
.act-more span {
  display: block;
  margin-top: 12px;
}
.badge {
  position: absolute;
  left: 112px;
  top: -28px;
  width: 113px;
  height: 46px;
  border-radius: 20px 20px 20px 4px;
  background: #F0384A;
  font-size: 30px;
  line-height: 46px;
  color: #fff;
}
.home-bar {
  position: absolute;
  left: 378px;
  top: 163px;
  width: 503px;
  height: 9px;
  border-radius: 5px;
  background: #B8B8B8;
}

/* 侧边条 */
.side {
  position: absolute;
  left: 1198px;
  top: 95px;
  display: flex;
  align-items: center;
  width: 62px;
  height: 415px;
  padding-left: 19px;
  border-radius: 24px 0 0 24px;
  background: #4D4D4D;
}
.side svg {
  width: 18px;
  height: 36px;
}
```
